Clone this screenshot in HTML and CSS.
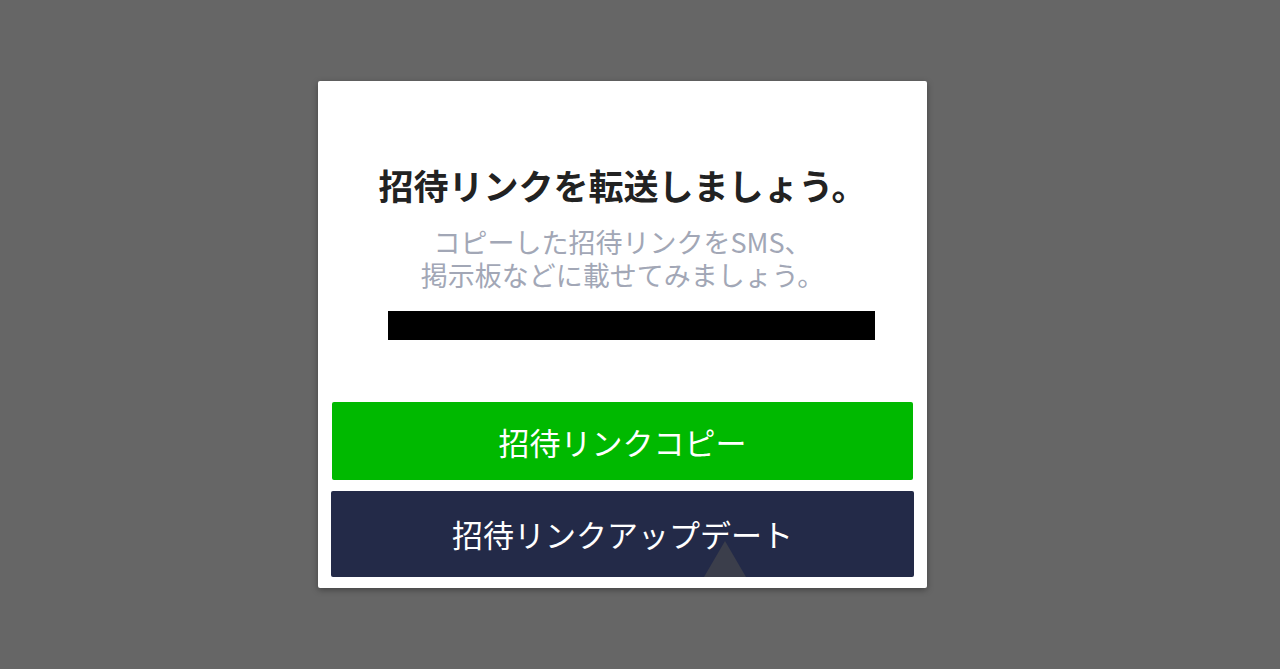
FILE: index.html
```html
<!DOCTYPE html>
<html lang="ja">
<head>
<meta charset="utf-8">
<link rel="stylesheet" href="styles.css">
</head>
<body>
<div class="stage">
  <div class="dialog">
    <h1 class="title">招待リンクを転送しましょう。</h1>
    <p class="desc">コピーした招待リンクをSMS、<br>掲示板などに載せてみましょう。</p>
    <div class="link-bar"></div>
    <div class="actions">
      <button class="btn btn-copy">招待リンクコピー</button>
      <button class="btn btn-update"><span class="pointer"></span><span class="label">招待リンクアップデート</span></button>
    </div>
  </div>
</div>
</body>
</html>
```
FILE: styles.css
```css
html, body {
  margin: 0;
  padding: 0;
  height: 100%;
}
body {
  background: #666666;
  font-family: "Noto Sans CJK JP", "Noto Sans", sans-serif;
}
.stage {
  height: 100%;
  display: flex;
  align-items: center;
  padding-left: 318px;
}
.dialog {
  width: 609px;
  height: 507px;
  box-sizing: border-box;
  background: #ffffff;
  border-radius: 2px;
  box-shadow: 0 2px 6px rgba(0, 0, 0, 0.35);
  display: flex;
  flex-direction: column;
  align-items: center;
  padding: 0 13px 11px;
}
.title {
  margin: 82px 0 0;
  font-size: 35px;
  line-height: 44px;
  font-weight: 700;
  color: #222222;
  letter-spacing: 0;
}
.desc {
  margin: 18px 0 0;
  font-size: 27px;
  line-height: 33px;
  text-align: center;
  color: #a2a7b6;
}
.link-bar {
  width: 487px;
  height: 29px;
  background: #000000;
  margin: 20px 0 0 18px;
}
.actions {
  margin-top: auto;
  align-self: stretch;
  display: flex;
  flex-direction: column;
  gap: 11px;
}
.btn {
  border: none;
  font-family: inherit;
  color: #ffffff;
  font-size: 31px;
  border-radius: 2px;
  display: flex;
  align-items: center;
  justify-content: center;
  padding: 0;
}
.btn-copy {
  background: #00b900;
  height: 78px;
  margin: 0 1px;
}
.btn-update {
  background: #232a48;
  height: 86px;
  position: relative;
  overflow: hidden;
}
.btn-update .label {
  position: relative;
  top: -1px;
}
.pointer {
  position: absolute;
  left: 373px;
  bottom: 0;
  width: 42px;
  height: 36px;
  background: #3b3e4b;
  clip-path: polygon(50% 0, 100% 100%, 0 100%);
}
```
